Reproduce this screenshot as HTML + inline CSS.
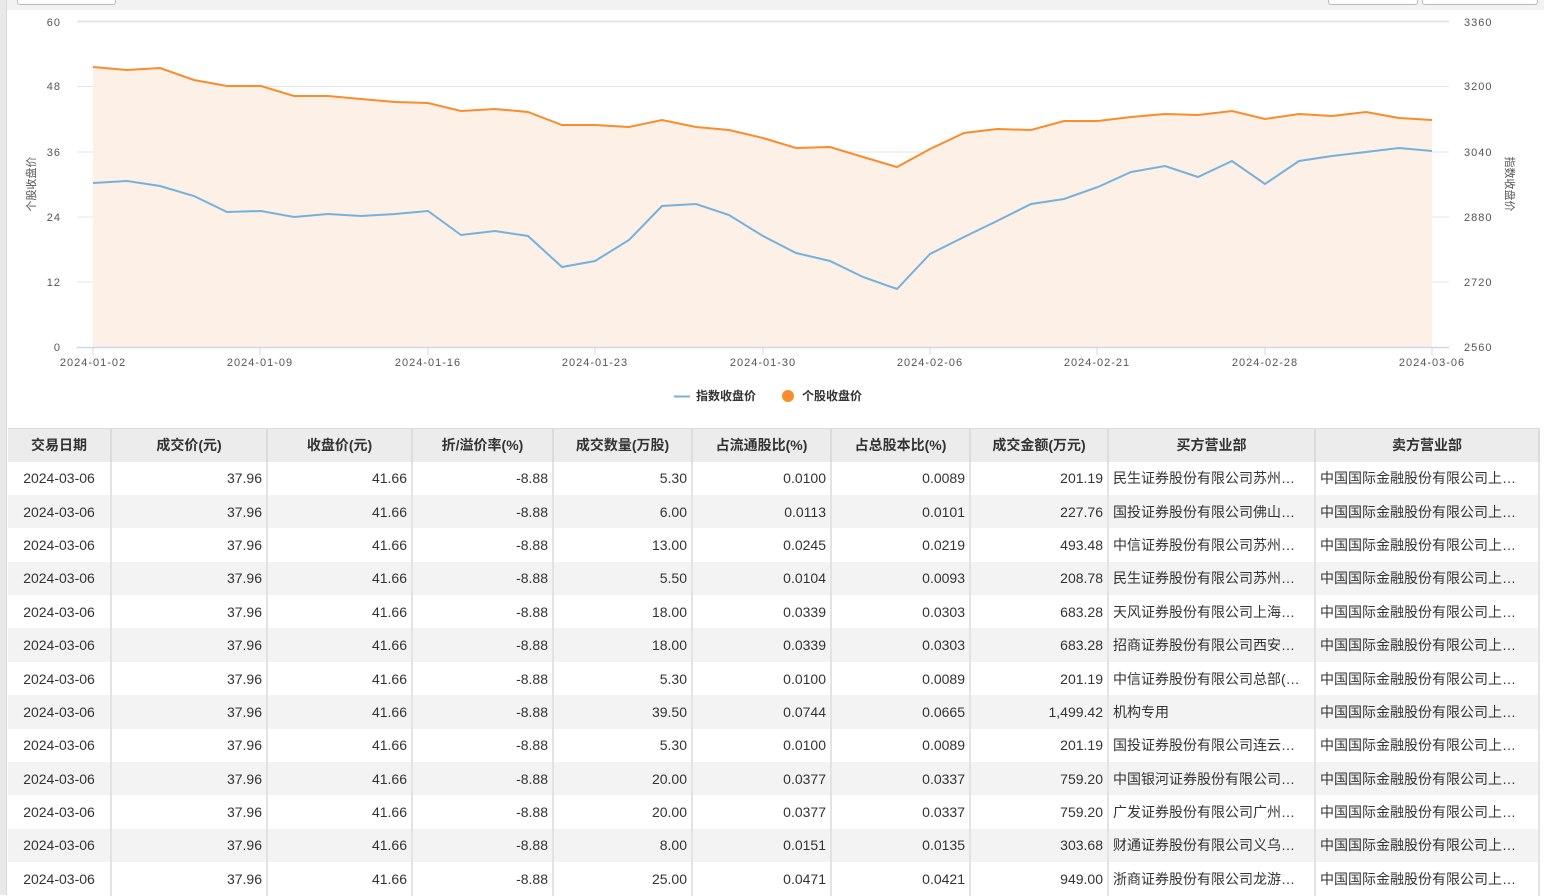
<!DOCTYPE html>
<html><head><meta charset="utf-8"><style>
*{margin:0;padding:0;box-sizing:border-box}
body{width:1544px;height:895px;overflow:hidden;background:#fff;font-family:"Liberation Sans","Noto Sans CJK SC",sans-serif;position:relative}
.lb{position:absolute;left:0;top:0;width:7px;height:895px;background:#e9e9e9;border-right:1px solid #d8d8d8}
.top{position:absolute;left:7px;top:0;width:1537px;height:10px;background:#f2f2f2}
.btn{position:absolute;top:-4px;height:9px;border:1px solid #bbb;border-top:none;background:#fff;border-radius:0 0 3px 3px}
table{position:absolute;left:8px;top:428px;border-collapse:collapse;table-layout:fixed;width:1531px;font-size:14px;color:#333}
th{height:33px;background:#ececec;font-weight:bold;color:#333;border-right:2px solid #dcdcdc;border-top:1px solid #ddd;text-align:center}
td{height:33.4px;border-right:2px solid #e3e3e3;padding:0 4px;white-space:nowrap;overflow:hidden;text-align:right}
tr:nth-child(odd) td{background:#f3f3f3}
td.c{text-align:center}td.l{text-align:left}
</style></head><body>
<div class="lb"></div><div class="top"></div>
<div class="btn" style="left:17px;width:99px"></div>
<div class="btn" style="left:1328px;width:90px"></div>
<div class="btn" style="left:1422px;width:116px"></div>
<svg style="position:absolute;left:0;top:0" width="1544" height="420" font-family="Liberation Sans,Noto Sans CJK SC,sans-serif">
<g stroke="#e6e6e6" stroke-width="1">
<line x1="77" y1="21.5" x2="1449" y2="21.5" stroke-width="2"/><line x1="77" y1="86.5" x2="1449" y2="86.5"/><line x1="77" y1="152" x2="1449" y2="152"/><line x1="77" y1="217" x2="1449" y2="217"/><line x1="77" y1="282" x2="1449" y2="282"/></g>
<polygon fill="#fdf0e6" points="93,347 93,67 127,70 160,68 194,80 227,86 261,86 294,96 328,96 361,99 395,102 428,103 461,111 495,109 528,112 562,125 595,125 629,127 662,120 696,127 729,130 763,138 796,148 830,147 863,157 897,167 930,149 964,133 997,129 1031,130 1064,121 1098,121 1131,117 1165,114 1198,115 1232,111 1265,119 1299,114 1332,116 1366,112 1399,118 1432,120 1432,347"/>
<line x1="77" y1="347.5" x2="1449" y2="347.5" stroke="#d0d8e8" stroke-width="1.5"/>
<g stroke="#d0d8e8"><line x1="93" y1="347" x2="93" y2="355"/><line x1="260" y1="347" x2="260" y2="355"/><line x1="428" y1="347" x2="428" y2="355"/><line x1="595" y1="347" x2="595" y2="355"/><line x1="763" y1="347" x2="763" y2="355"/><line x1="930" y1="347" x2="930" y2="355"/><line x1="1097" y1="347" x2="1097" y2="355"/><line x1="1265" y1="347" x2="1265" y2="355"/><line x1="1432" y1="347" x2="1432" y2="355"/></g>
<polyline fill="none" stroke="#fa8c2c" stroke-width="2" points="93,67 127,70 160,68 194,80 227,86 261,86 294,96 328,96 361,99 395,102 428,103 461,111 495,109 528,112 562,125 595,125 629,127 662,120 696,127 729,130 763,138 796,148 830,147 863,157 897,167 930,149 964,133 997,129 1031,130 1064,121 1098,121 1131,117 1165,114 1198,115 1232,111 1265,119 1299,114 1332,116 1366,112 1399,118 1432,120"/>
<polyline fill="none" stroke="#76b1dd" stroke-width="2" points="93,183 127,181 160,186 194,196 227,212 261,211 294,217 328,214 361,216 395,214 428,211 461,235 495,231 528,236 562,267 595,261 629,240 662,206 696,204 729,215 763,236 796,253 830,261 863,277 897,289 930,254 964,237 997,221 1031,204 1064,199 1098,187 1131,172 1165,166 1198,177 1232,161 1265,184 1299,161 1332,156 1366,152 1399,148 1432,151"/>
<g font-size="11" fill="#555" text-anchor="end" letter-spacing="1"><text x="61" y="26">60</text><text x="61" y="90">48</text><text x="61" y="156">36</text><text x="61" y="221">24</text><text x="61" y="286">12</text><text x="61" y="351">0</text></g>
<g font-size="11" fill="#555" letter-spacing="1"><text x="1464" y="26">3360</text><text x="1464" y="90">3200</text><text x="1464" y="156">3040</text><text x="1464" y="221">2880</text><text x="1464" y="286">2720</text><text x="1464" y="351">2560</text></g>
<g font-size="11" fill="#555" text-anchor="middle" letter-spacing="1"><text x="93" y="366">2024-01-02</text><text x="260" y="366">2024-01-09</text><text x="428" y="366">2024-01-16</text><text x="595" y="366">2024-01-23</text><text x="763" y="366">2024-01-30</text><text x="930" y="366">2024-02-06</text><text x="1097" y="366">2024-02-21</text><text x="1265" y="366">2024-02-28</text><text x="1432" y="366">2024-03-06</text></g>
<text font-size="11" fill="#555" transform="translate(35,184) rotate(-90)" text-anchor="middle">个股收盘价</text>
<text font-size="11" fill="#555" transform="translate(1506,184) rotate(90)" text-anchor="middle">指数收盘价</text>
<line x1="674" y1="396.5" x2="690" y2="396.5" stroke="#76b1dd" stroke-width="2"/>
<text x="696" y="400" font-size="12" font-weight="bold" fill="#333">指数收盘价</text>
<circle cx="788" cy="396" r="6" fill="#fa8c2c"/>
<text x="802" y="400" font-size="12" font-weight="bold" fill="#333">个股收盘价</text>
</svg>
<table>
<colgroup><col style="width:103px"><col style="width:156px"><col style="width:145px"><col style="width:141px"><col style="width:139px"><col style="width:139px"><col style="width:139px"><col style="width:138px"><col style="width:207px"><col style="width:224px"></colgroup>
<tr><th>交易日期</th><th>成交价(元)</th><th>收盘价(元)</th><th>折/溢价率(%)</th><th>成交数量(万股)</th><th>占流通股比(%)</th><th>占总股本比(%)</th><th>成交金额(万元)</th><th>买方营业部</th><th>卖方营业部</th></tr>
<tr><td class="c">2024-03-06</td><td>37.96</td><td>41.66</td><td>-8.88</td><td>5.30</td><td>0.0100</td><td>0.0089</td><td>201.19</td><td class="l">民生证券股份有限公司苏州…</td><td class="l">中国国际金融股份有限公司上…</td></tr>
<tr><td class="c">2024-03-06</td><td>37.96</td><td>41.66</td><td>-8.88</td><td>6.00</td><td>0.0113</td><td>0.0101</td><td>227.76</td><td class="l">国投证券股份有限公司佛山…</td><td class="l">中国国际金融股份有限公司上…</td></tr>
<tr><td class="c">2024-03-06</td><td>37.96</td><td>41.66</td><td>-8.88</td><td>13.00</td><td>0.0245</td><td>0.0219</td><td>493.48</td><td class="l">中信证券股份有限公司苏州…</td><td class="l">中国国际金融股份有限公司上…</td></tr>
<tr><td class="c">2024-03-06</td><td>37.96</td><td>41.66</td><td>-8.88</td><td>5.50</td><td>0.0104</td><td>0.0093</td><td>208.78</td><td class="l">民生证券股份有限公司苏州…</td><td class="l">中国国际金融股份有限公司上…</td></tr>
<tr><td class="c">2024-03-06</td><td>37.96</td><td>41.66</td><td>-8.88</td><td>18.00</td><td>0.0339</td><td>0.0303</td><td>683.28</td><td class="l">天风证券股份有限公司上海…</td><td class="l">中国国际金融股份有限公司上…</td></tr>
<tr><td class="c">2024-03-06</td><td>37.96</td><td>41.66</td><td>-8.88</td><td>18.00</td><td>0.0339</td><td>0.0303</td><td>683.28</td><td class="l">招商证券股份有限公司西安…</td><td class="l">中国国际金融股份有限公司上…</td></tr>
<tr><td class="c">2024-03-06</td><td>37.96</td><td>41.66</td><td>-8.88</td><td>5.30</td><td>0.0100</td><td>0.0089</td><td>201.19</td><td class="l">中信证券股份有限公司总部(…</td><td class="l">中国国际金融股份有限公司上…</td></tr>
<tr><td class="c">2024-03-06</td><td>37.96</td><td>41.66</td><td>-8.88</td><td>39.50</td><td>0.0744</td><td>0.0665</td><td>1,499.42</td><td class="l">机构专用</td><td class="l">中国国际金融股份有限公司上…</td></tr>
<tr><td class="c">2024-03-06</td><td>37.96</td><td>41.66</td><td>-8.88</td><td>5.30</td><td>0.0100</td><td>0.0089</td><td>201.19</td><td class="l">国投证券股份有限公司连云…</td><td class="l">中国国际金融股份有限公司上…</td></tr>
<tr><td class="c">2024-03-06</td><td>37.96</td><td>41.66</td><td>-8.88</td><td>20.00</td><td>0.0377</td><td>0.0337</td><td>759.20</td><td class="l">中国银河证券股份有限公司…</td><td class="l">中国国际金融股份有限公司上…</td></tr>
<tr><td class="c">2024-03-06</td><td>37.96</td><td>41.66</td><td>-8.88</td><td>20.00</td><td>0.0377</td><td>0.0337</td><td>759.20</td><td class="l">广发证券股份有限公司广州…</td><td class="l">中国国际金融股份有限公司上…</td></tr>
<tr><td class="c">2024-03-06</td><td>37.96</td><td>41.66</td><td>-8.88</td><td>8.00</td><td>0.0151</td><td>0.0135</td><td>303.68</td><td class="l">财通证券股份有限公司义乌…</td><td class="l">中国国际金融股份有限公司上…</td></tr>
<tr><td class="c">2024-03-06</td><td>37.96</td><td>41.66</td><td>-8.88</td><td>25.00</td><td>0.0471</td><td>0.0421</td><td>949.00</td><td class="l">浙商证券股份有限公司龙游…</td><td class="l">中国国际金融股份有限公司上…</td></tr>
</table>
</body></html>
